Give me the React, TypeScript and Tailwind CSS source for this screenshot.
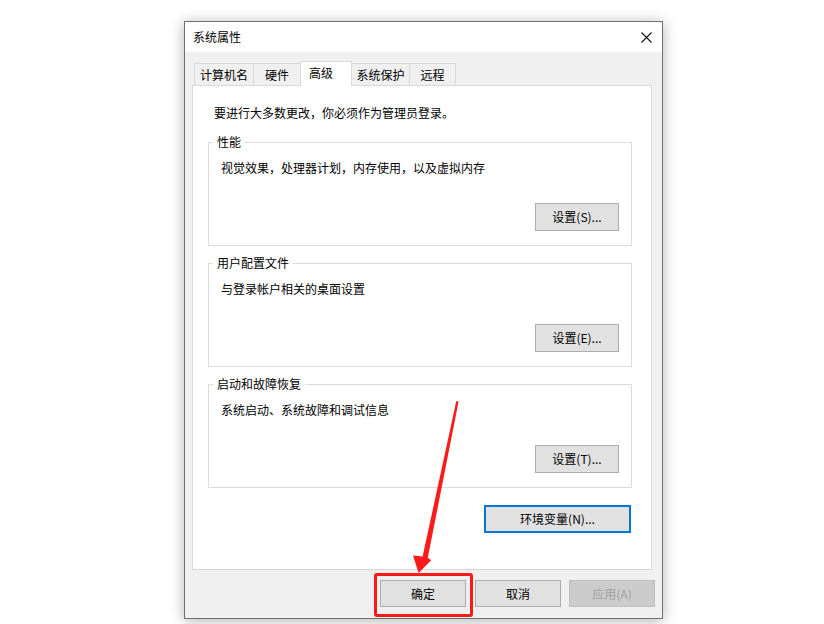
import React from "react";

const TABS = [
  { name: "计算机名", w: "w-[60px]" },
  { name: "硬件", w: "w-[48px]" },
  { name: "高级", w: "w-[52px]", active: true },
  { name: "系统保护", w: "w-[59px]" },
  { name: "远程", w: "w-[47px]" },
];

const GROUPS = [
  { title: "性能", desc: "视觉效果，处理器计划，内存使用，以及虚拟内存", btn: "设置(S)..." },
  { title: "用户配置文件", desc: "与登录帐户相关的桌面设置", btn: "设置(E)..." },
  { title: "启动和故障恢复", desc: "系统启动、系统故障和调试信息", btn: "设置(T)..." },
];

function Group({ title, desc, btn }: { title: string; desc: string; btn: string }) {
  return (
    <fieldset className="ml-[15px] w-[424px] border border-[#dcdcdc] p-0 pb-[14px]">
      <legend className="ml-[4px] px-[4px] leading-[16px]">{title}</legend>
      <div className="pl-[12px] pt-[10px] leading-[16px]">{desc}</div>
      <div className="mt-[27px] flex justify-end pr-[12px]">
        <button className="h-[28px] w-[84px] border border-[#adadad] bg-[#e1e1e1] leading-[16px]">
          {btn}
        </button>
      </div>
    </fieldset>
  );
}

export default function App() {
  return (
    <div className="relative h-[624px] w-[824px] overflow-hidden bg-white pl-[184px] pt-[21px] text-[12px] text-black font-['Microsoft_YaHei_UI','Noto_Sans_CJK_SC',sans-serif]">
      {/* dialog window */}
      <div className="flex h-[598px] w-[479px] flex-col border border-[#6f6f6f] bg-[#f0f0f0] shadow-[0_2px_14px_rgba(0,0,0,0.3)]">
        {/* title bar */}
        <div className="flex h-[30px] items-center justify-between bg-white pl-[8px] pr-[10px]">
          <span className="leading-[16px]">系统属性</span>
          <svg width="11" height="11" viewBox="0 0 11 11" className="block">
            <path d="M0.5 0.5 L10.5 10.5 M10.5 0.5 L0.5 10.5" stroke="#111" strokeWidth="1.1" />
          </svg>
        </div>

        <div className="flex flex-1 flex-col pl-[7px] pr-[7px] pt-[9px]">
          {/* tabs */}
          <div className="flex h-[24px] items-end pl-[2px]">
            {TABS.map((t, i) =>
              t.active ? (
                <div
                  key={t.name}
                  className={`relative z-10 -mb-px -ml-px h-[25px] ${t.w} border border-b-0 border-[#d9d9d9] bg-white pl-[8px] pt-[3px] leading-[16px]`}
                >
                  {t.name}
                </div>
              ) : (
                <div
                  key={t.name}
                  className={`h-[22px] ${t.w} ${i > 0 ? "-ml-px" : ""} flex justify-center border border-b-0 border-[#d9d9d9] bg-[#f0f0f0] pt-[3px] leading-[16px]`}
                >
                  {t.name}
                </div>
              )
            )}
          </div>

          {/* tab panel */}
          <div className="flex h-[485px] w-[460px] flex-col border border-[#d9d9d9] bg-white pt-[19px]">
            <div className="pl-[21px] leading-[16px]">要进行大多数更改，你必须作为管理员登录。</div>
            <div className="mt-[13px] flex flex-col gap-[9px]">
              {GROUPS.map((g) => (
                <Group key={g.title} {...g} />
              ))}
            </div>
            <div className="mt-[17px] flex justify-end pr-[20px]">
              <button className="h-[28px] w-[147px] border-2 border-[#0078d7] bg-[#e1e1e1] leading-[16px]">
                环境变量(N)...
              </button>
            </div>
          </div>

          {/* dialog buttons */}
          <div className="mt-[10px] flex justify-end gap-[8px]">
            <button className="mr-px h-[27px] w-[86px] border border-[#adadad] bg-[#e1e1e1] leading-[16px]">确定</button>
            <button className="h-[27px] w-[86px] border border-[#adadad] bg-[#e1e1e1] leading-[16px]">取消</button>
            <button className="h-[27px] w-[86px] border border-[#bfbfbf] bg-[#cccccc] leading-[16px] text-[#a0a0a0]">
              应用(A)
            </button>
          </div>
        </div>
      </div>

      {/* red annotation: highlight box */}
      <div className="absolute left-[374px] top-[573px] h-[44px] w-[99px] rounded-[3px] border-[3px] border-[#ff1a1a]" />

      {/* red annotation: arrow */}
      <svg className="pointer-events-none absolute left-0 top-0" width="824" height="624" viewBox="0 0 824 624">
        <polygon
          points="456.3,401 458.6,401.6 427.8,557.8 431.2,560.2 418.6,573 413,555.4 422.6,556.6"
          fill="#ff1a1a"
        />
      </svg>
    </div>
  );
}
